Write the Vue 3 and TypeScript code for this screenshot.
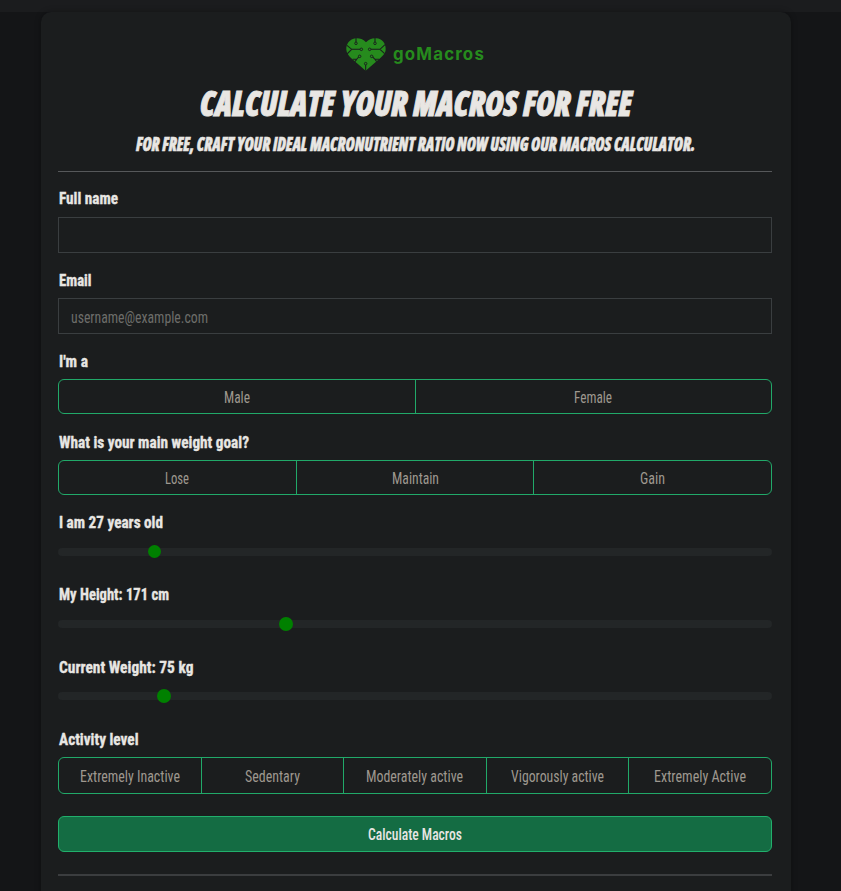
<script setup lang="ts">
import { h, ref } from 'vue'

interface FitProps { text: string; w: number; base?: number; height?: number }

// Condensed one-line text, fitted to a given advance width.
const Fit = (p: FitProps) =>
  h('svg', { class: 'fit', width: p.w + 2, height: p.height ?? 24 }, [
    h('text', { x: 1, y: p.base ?? 18, textLength: p.w, lengthAdjust: 'spacingAndGlyphs', fill: 'currentColor' }, p.text),
  ])
Fit.props = ['text', 'w', 'base', 'height']

interface Option { text: string; w: number }
interface Field {
  label: string
  w: number
  kind: 'input' | 'group' | 'range'
  size: string
  placeholder?: Option
  options?: Option[]
  at?: number
}

const fields = ref<Field[]>([
  { label: 'Full name', w: 59, kind: 'input', size: 'first' },
  { label: 'Email', w: 32.5, kind: 'input', size: 'mid', placeholder: { text: 'username@example.com', w: 137 } },
  { label: "I'm a", w: 29, kind: 'group', size: 'mid', options: [{ text: 'Male', w: 26 }, { text: 'Female', w: 38 }] },
  { label: 'What is your main weight goal?', w: 190, kind: 'group', size: 'goal', options: [{ text: 'Lose', w: 24 }, { text: 'Maintain', w: 47 }, { text: 'Gain', w: 25 }] },
  { label: 'I am 27 years old', w: 104, kind: 'range', size: 'slide small', at: 13.5 },
  { label: 'My Height: 171 cm', w: 110, kind: 'range', size: 'slide tall', at: 31.93 },
  { label: 'Current Weight: 75 kg', w: 134.5, kind: 'range', size: 'slide near', at: 14.8 },
  {
    label: 'Activity level', w: 79.5, kind: 'group', size: 'activity', options: [
      { text: 'Extremely Inactive', w: 100 }, { text: 'Sedentary', w: 55 }, { text: 'Moderately active', w: 97 },
      { text: 'Vigorously active', w: 93 }, { text: 'Extremely Active', w: 92 },
    ],
  },
])
</script>

<template>
  <div class="page">
    <div class="band"></div>
    <main class="card">
      <div class="logo">
        <svg width="40" height="33" viewBox="0 0 120 99">
          <path d="M60 13C50 2 38 0 29 1C11 3 0 18 1 35C2 45 8 53 15 60L59 98L103 60C112 52 119 45 119 33C119 15 108 2 91 1C79 0 69 3 60 13Z" fill="#268b1d" />
          <g fill="none" stroke="#1b1d1e" stroke-width="3.2">
            <path d="M30 0V12M87 0V12M43 34H17L3 22M17 34L3 48M75 34H102L117 20M102 34L116 47M38 57L32 64H20M32 64L27 71M80 57L87 64H99M87 64L92 71M59 98V81" />
            <g fill="#268b1d" stroke-width="2.8">
              <circle cx="30" cy="16" r="3.8" /><circle cx="87" cy="16" r="3.8" />
              <circle cx="46" cy="34" r="3.8" /><circle cx="71" cy="34" r="3.8" />
              <circle cx="41" cy="55" r="3.8" /><circle cx="77" cy="55" r="3.8" />
              <circle cx="59" cy="77" r="3.8" />
            </g>
          </g>
        </svg>
        <Fit class="brand" text="goMacros" :w="92" :base="22" :height="33" />
      </div>
      <h1><Fit class="title" text="CALCULATE YOUR MACROS FOR FREE" :w="432" :base="32" :height="44" /></h1>
      <h2><Fit class="subtitle" text="FOR FREE, CRAFT YOUR IDEAL MACRONUTRIENT RATIO NOW USING OUR MACROS CALCULATOR." :w="559" :base="21" :height="30" /></h2>
      <hr class="rule" />
      <form @submit.prevent>
        <div v-for="f in fields" :key="f.label" class="field" :class="f.size">
          <Fit class="label" :text="f.label" :w="f.w" />
          <div v-if="f.kind === 'input'" class="input">
            <Fit v-if="f.placeholder" :text="f.placeholder.text" :w="f.placeholder.w" />
          </div>
          <div v-else-if="f.kind === 'group'" class="group">
            <div v-for="o in f.options" :key="o.text" class="option"><Fit :text="o.text" :w="o.w" /></div>
          </div>
          <div v-else class="track"><span class="thumb" :style="{ left: f.at + '%' }"></span></div>
        </div>
        <button class="submit" type="submit"><Fit text="Calculate Macros" :w="94" /></button>
      </form>
      <hr class="rule end" />
    </main>
  </div>
</template>

<style>
body { margin: 0; background: #141517; overflow: hidden; }
</style>

<style scoped>
.page { height: 891px; overflow: hidden; background: #141517; font-family: Roboto, sans-serif; color: #e8e6e3; }
.band { height: 12px; background: #1b1c1e; }
.card { box-sizing: border-box; width: 750px; height: 900px; margin-left: 41px; padding: 26px 19px 0 17px; border-radius: 10px; background: #1b1d1e; box-shadow: 0 0 6px rgba(0, 0, 0, .32); }
.fit { display: block; flex: none; overflow: visible; font-size: 17px; font-stretch: 75%; }
.logo { display: flex; margin-left: 288px; height: 33px; }
.brand { margin-left: 6px; color: #268b1d; font-family: Inter, sans-serif; font-size: 17px; font-weight: 700; letter-spacing: 1.2px; }
h1, h2 { display: flex; justify-content: center; margin: 0; }
h1 { height: 44px; margin-top: 13px; padding-left: 2px; }
h2 { height: 30px; margin-top: 2px; }
.title, .subtitle { font-family: "Open Sans", Roboto, sans-serif; font-weight: 800; font-style: italic; stroke: currentColor; }
.title { font-size: 36px; stroke-width: .9px; }
.subtitle { font-size: 19.5px; stroke-width: .5px; }
.rule { height: 1px; margin: 11px 0 0; border: 0; background: #56585a; }
form { padding-top: 14px; }
.field { display: flex; flex-direction: column; gap: 6px; }
.first { height: 82px; gap: 7px; }
.mid { height: 81px; }
.goal { height: 80px; }
.slide { height: 72px; gap: 14px; }
.slide.tall { height: 73px; }
.slide.near { gap: 13px; }
.activity { height: 89px; }
.label { font-weight: 700; stroke: currentColor; stroke-width: .35px; }
.input { box-sizing: border-box; height: 36px; padding: 6px 11px; border: 1px solid #3a3e40; color: #6d6d6a; }
.group { box-sizing: border-box; display: flex; height: 35px; border: 1px solid #21a969; border-radius: 6px; }
.activity .group { height: 37px; }
.option { box-sizing: border-box; display: flex; flex: 1; justify-content: center; padding-top: 5px; color: #9e988f; }
.activity .option { padding-top: 6px; }
.option + .option { border-left: 1px solid #21a969; }
.track { position: relative; height: 8px; border-radius: 4px; background: #232627; }
.thumb { position: absolute; top: -3px; width: 14px; height: 14px; margin-left: -7px; border-radius: 50%; background: #008000; }
.small .thumb { width: 13px; height: 13px; margin-left: -6.5px; }
.submit { box-sizing: border-box; display: flex; justify-content: center; width: 100%; height: 36px; padding: 5px 0 0; border: 1px solid #21b06c; border-radius: 6px; background: #146c43; color: #e8e6e3; font-family: inherit; font-weight: 500; }
.end { height: 2px; margin-top: 22px; background: #3b3d3f; }
</style>
